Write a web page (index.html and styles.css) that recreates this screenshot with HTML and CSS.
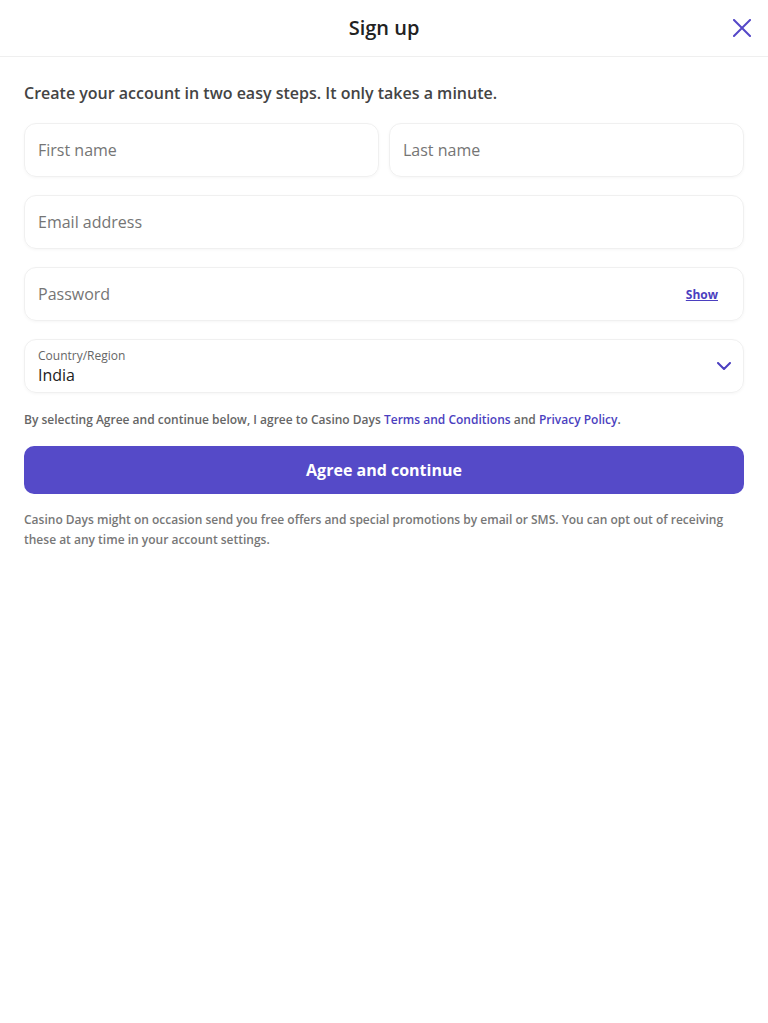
FILE: index.html
```html
<!DOCTYPE html>
<html lang="en">
<head>
<meta charset="utf-8">
<title>Sign up</title>
<link rel="stylesheet" href="styles.css">
</head>
<body>
<header class="topbar">
  <h1 class="title">Sign up</h1>
  <button class="close" aria-label="Close">
    <svg width="18" height="18" viewBox="0 0 18 18"><path d="M1 1 L17 17 M17 1 L1 17" stroke="#5548c8" stroke-width="2" fill="none" stroke-linecap="square"/></svg>
  </button>
</header>
<main class="content">
  <p class="intro">Create your account in two easy steps. It only takes a minute.</p>
  <form class="form">
    <div class="row">
      <div class="field"><span class="placeholder">First name</span></div>
      <div class="field"><span class="placeholder">Last name</span></div>
    </div>
    <div class="field"><span class="placeholder">Email address</span></div>
    <div class="field"><span class="placeholder">Password</span><a class="show" href="#">Show</a></div>
    <div class="field select">
      <div class="select-text">
        <span class="label">Country/Region</span>
        <span class="value">India</span>
      </div>
      <svg class="chevron" width="14" height="8" viewBox="0 0 14 8"><path d="M1 1 L7 7 L13 1" stroke="#4b3fc0" stroke-width="2" fill="none" stroke-linecap="round" stroke-linejoin="round"/></svg>
    </div>
  </form>
  <p class="legal">By selecting Agree and continue below, I agree to Casino Days <a href="#">Terms and Conditions</a> and <a href="#">Privacy Policy</a>.</p>
  <button class="cta">Agree and continue</button>
  <p class="note">Casino Days might on occasion send you free offers and special promotions by email or SMS. You can opt out of receiving these at any time in your account settings.</p>
</main>
</body>
</html>
```
FILE: styles.css
```css
* { box-sizing: border-box; }
body {
  margin: 0;
  background: #fff;
  font-family: "Open Sans", "Noto Sans", sans-serif;
  color: #222;
}
.topbar {
  height: 57px;
  border-bottom: 1px solid #efefef;
  display: flex;
  align-items: center;
  justify-content: center;
  position: relative;
}
.title {
  margin: 0;
  font-size: 20px;
  font-weight: 600;
  color: #222;
  line-height: 26px;
  padding-bottom: 1px;
}
.close {
  position: absolute;
  right: 17px;
  top: 19px;
  background: none;
  border: 0;
  padding: 0;
  width: 18px;
  height: 18px;
  display: flex;
}
.content {
  padding: 0 24px;
}
.intro {
  margin: 25px 0 19px;
  font-size: 16px;
  font-weight: 600;
  color: #444;
  line-height: 22px;
}
.form {
  display: flex;
  flex-direction: column;
  gap: 18px;
}
.row {
  display: grid;
  grid-template-columns: 1fr 1fr;
  gap: 10px;
}
.field {
  height: 54px;
  border: 1px solid #f0f0f0;
  border-radius: 12px;
  box-shadow: 0 1px 3px rgba(0,0,0,0.04);
  display: flex;
  align-items: center;
  justify-content: space-between;
  padding: 0 25px 0 13px;
}
.placeholder {
  font-size: 16px;
  color: #757575;
}
.show {
  font-size: 12px;
  font-weight: 700;
  color: #4b3fc0;
  text-decoration: underline;
}
.select { padding-right: 12px; }
.select-text {
  display: flex;
  flex-direction: column;
  padding-top: 1px;
}
.label {
  font-size: 12px;
  color: #666;
  line-height: 16px;
}
.value {
  font-size: 16px;
  color: #222;
  line-height: 22px;
}
.legal {
  margin: 18px 0 17px;
  font-size: 12px;
  font-weight: 600;
  color: #666;
  line-height: 18px;
}
.legal a {
  color: #4b3fc0;
  text-decoration: none;
}
.cta {
  display: block;
  width: 100%;
  height: 48px;
  border: 0;
  border-radius: 10px;
  background: #554ac8;
  color: #fff;
  font-family: inherit;
  font-size: 16px;
  font-weight: 700;
}
.note {
  margin: 16px 0 0;
  font-size: 12px;
  font-weight: 600;
  color: #777;
  line-height: 20px;
}
```
